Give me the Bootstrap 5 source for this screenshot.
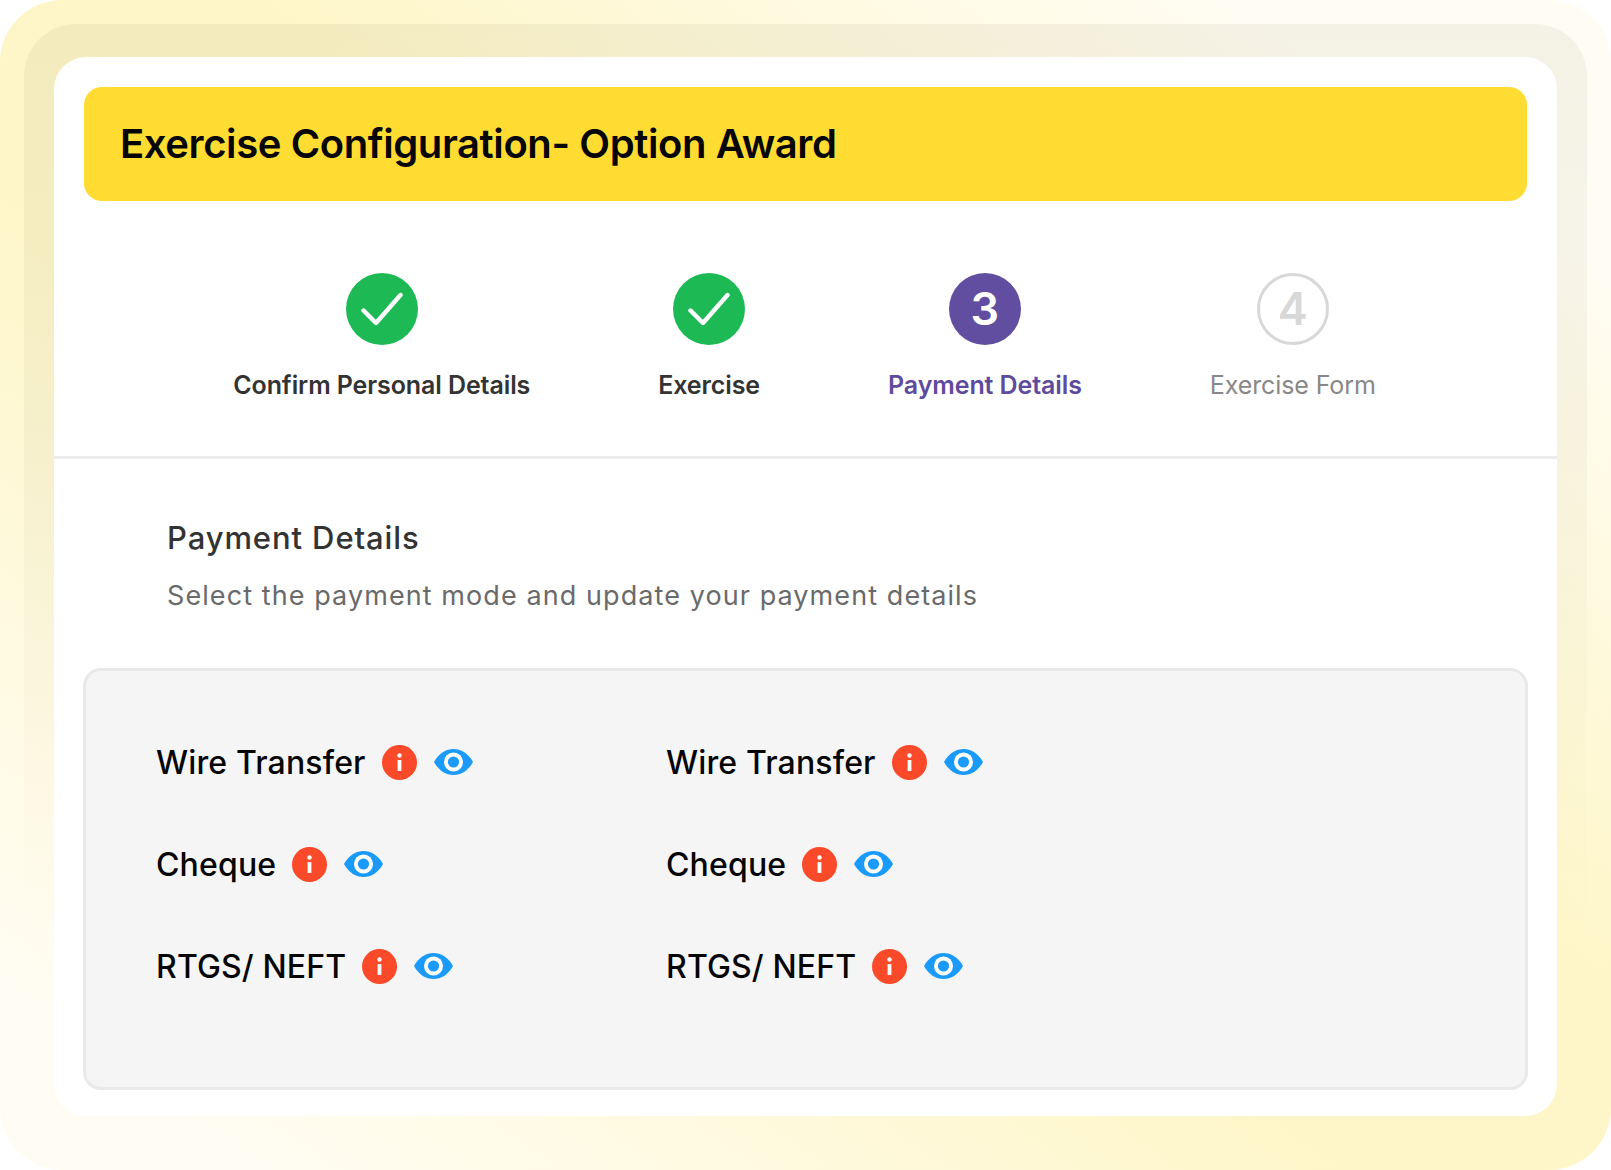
<!doctype html>
<html lang="en">
<head>
<meta charset="utf-8">
<title>Exercise Configuration</title>
<link rel="stylesheet" href="https://cdn.jsdelivr.net/npm/bootstrap@5.3.0/dist/css/bootstrap.min.css">
<style>
html,body{margin:0;background:#fff;font-family:Inter,"Liberation Sans",sans-serif}
.page-shell{width:1611px;height:1170px;border-radius:62px;padding:24px 24px 0;background:linear-gradient(to top right,#fffdf3 8%,#fef6c8 42%,#fef6c8 58%,#fffdf3 88%);overflow:hidden}
.band-shell{height:1146px;border-radius:52px 52px 0 0;padding:33px 30px 0;background:linear-gradient(to bottom,rgba(110,100,60,.075),rgba(110,100,60,.055) 35%,rgba(110,100,60,0) 80%)}
.sheet{width:1503px;height:1059px;background:#fff;border-radius:32px;padding-top:30px}
.title-bar{margin:0 30px;height:114px;background:#ffdc32;border-radius:18px;padding-left:36px}
.title-bar h1{margin:0;font-size:40px;font-weight:600;letter-spacing:-.4px;color:#050505}
.step-row{gap:128px;padding:72px 2px 0 0;height:258px;border-bottom:3px solid #ededed}
.step-dot{width:72px;height:72px;border-radius:50%;font-size:45px;font-weight:600;line-height:1;padding-bottom:2px}
.dot-done{background:#1db954;padding-bottom:0}
.dot-now{background:#624ea0;color:#fff}
.dot-next{border:3px solid #d8d8d8;color:#d8d8d8}
.step-text{margin-top:24px;font-size:25px;line-height:32px;font-weight:600;letter-spacing:-.1px;color:#333;white-space:nowrap}
.text-now{color:#5f4b9e}
.text-next{color:#888;font-weight:400;letter-spacing:-.1px}
.detail-head{padding:58px 0 0 113px;height:209px}
.detail-head h2{margin:0;font-size:31px;line-height:42px;font-weight:500;letter-spacing:.9px;color:#333}
.detail-head p{margin:19px 0 0;font-size:27px;line-height:36px;letter-spacing:1.08px;color:#6a6a6a}
.mode-box{margin:0 29px;height:422px;background:#f5f5f5;border:3px solid #e9e9e9;border-radius:18px;padding:74px 0 0 70px;display:grid;grid-template-columns:510px 510px;grid-auto-rows:36px;row-gap:66px}
.mode-item{gap:16px;font-size:32px;line-height:36px;font-weight:500;letter-spacing:.15px;color:#050505;white-space:nowrap}
.mode-item svg{flex:none;display:block;margin-bottom:2px}
.eye-icon{margin-left:1px}
</style>
</head>
<body>
<div class="page-shell">
 <div class="band-shell">
  <div class="sheet">
   <div class="title-bar d-flex align-items-center"><h1>Exercise Configuration- Option Award</h1></div>
   <div class="step-row d-flex justify-content-center align-items-start">
    <div class="d-flex flex-column align-items-center">
     <div class="step-dot dot-done d-flex align-items-center justify-content-center"><svg width="42" height="34" viewBox="0 0 42 34" fill="none"><path d="M2.5 18.5 15 31 39.5 3" stroke="#fff" stroke-width="4.4" stroke-linecap="round" stroke-linejoin="round"/></svg></div>
     <div class="step-text">Confirm Personal Details</div>
    </div>
    <div class="d-flex flex-column align-items-center">
     <div class="step-dot dot-done d-flex align-items-center justify-content-center"><svg width="42" height="34" viewBox="0 0 42 34" fill="none"><path d="M2.5 18.5 15 31 39.5 3" stroke="#fff" stroke-width="4.4" stroke-linecap="round" stroke-linejoin="round"/></svg></div>
     <div class="step-text">Exercise</div>
    </div>
    <div class="d-flex flex-column align-items-center">
     <div class="step-dot dot-now d-flex align-items-center justify-content-center">3</div>
     <div class="step-text text-now">Payment Details</div>
    </div>
    <div class="d-flex flex-column align-items-center">
     <div class="step-dot dot-next d-flex align-items-center justify-content-center">4</div>
     <div class="step-text text-next">Exercise Form</div>
    </div>
   </div>
   <div class="detail-head">
    <h2>Payment Details</h2>
    <p>Select the payment mode and update your payment details</p>
   </div>
   <div class="mode-box">
    <div class="mode-item d-flex align-items-center">Wire Transfer<svg width="35" height="35" viewBox="0 0 35 35"><circle cx="17.5" cy="17.5" r="17.5" fill="#fb4a2a"/><circle cx="17.5" cy="10.5" r="2.2" fill="#fff"/><rect x="15.6" y="15" width="3.8" height="11" rx=".6" fill="#fff"/></svg><svg class="eye-icon" width="39" height="26" viewBox="0 0 39 26"><path d="M0 13C5 4 12 0 19.5 0S34 4 39 13C34 22 27 26 19.5 26S5 22 0 13Z" fill="#1a9bfc"/><circle cx="19.5" cy="13" r="9.5" fill="#fff"/><circle cx="19.5" cy="13" r="5.6" fill="#1a9bfc"/></svg></div>
    <div class="mode-item d-flex align-items-center">Wire Transfer<svg width="35" height="35" viewBox="0 0 35 35"><circle cx="17.5" cy="17.5" r="17.5" fill="#fb4a2a"/><circle cx="17.5" cy="10.5" r="2.2" fill="#fff"/><rect x="15.6" y="15" width="3.8" height="11" rx=".6" fill="#fff"/></svg><svg class="eye-icon" width="39" height="26" viewBox="0 0 39 26"><path d="M0 13C5 4 12 0 19.5 0S34 4 39 13C34 22 27 26 19.5 26S5 22 0 13Z" fill="#1a9bfc"/><circle cx="19.5" cy="13" r="9.5" fill="#fff"/><circle cx="19.5" cy="13" r="5.6" fill="#1a9bfc"/></svg></div>
    <div class="mode-item d-flex align-items-center">Cheque<svg width="35" height="35" viewBox="0 0 35 35"><circle cx="17.5" cy="17.5" r="17.5" fill="#fb4a2a"/><circle cx="17.5" cy="10.5" r="2.2" fill="#fff"/><rect x="15.6" y="15" width="3.8" height="11" rx=".6" fill="#fff"/></svg><svg class="eye-icon" width="39" height="26" viewBox="0 0 39 26"><path d="M0 13C5 4 12 0 19.5 0S34 4 39 13C34 22 27 26 19.5 26S5 22 0 13Z" fill="#1a9bfc"/><circle cx="19.5" cy="13" r="9.5" fill="#fff"/><circle cx="19.5" cy="13" r="5.6" fill="#1a9bfc"/></svg></div>
    <div class="mode-item d-flex align-items-center">Cheque<svg width="35" height="35" viewBox="0 0 35 35"><circle cx="17.5" cy="17.5" r="17.5" fill="#fb4a2a"/><circle cx="17.5" cy="10.5" r="2.2" fill="#fff"/><rect x="15.6" y="15" width="3.8" height="11" rx=".6" fill="#fff"/></svg><svg class="eye-icon" width="39" height="26" viewBox="0 0 39 26"><path d="M0 13C5 4 12 0 19.5 0S34 4 39 13C34 22 27 26 19.5 26S5 22 0 13Z" fill="#1a9bfc"/><circle cx="19.5" cy="13" r="9.5" fill="#fff"/><circle cx="19.5" cy="13" r="5.6" fill="#1a9bfc"/></svg></div>
    <div class="mode-item d-flex align-items-center">RTGS/ NEFT<svg width="35" height="35" viewBox="0 0 35 35"><circle cx="17.5" cy="17.5" r="17.5" fill="#fb4a2a"/><circle cx="17.5" cy="10.5" r="2.2" fill="#fff"/><rect x="15.6" y="15" width="3.8" height="11" rx=".6" fill="#fff"/></svg><svg class="eye-icon" width="39" height="26" viewBox="0 0 39 26"><path d="M0 13C5 4 12 0 19.5 0S34 4 39 13C34 22 27 26 19.5 26S5 22 0 13Z" fill="#1a9bfc"/><circle cx="19.5" cy="13" r="9.5" fill="#fff"/><circle cx="19.5" cy="13" r="5.6" fill="#1a9bfc"/></svg></div>
    <div class="mode-item d-flex align-items-center">RTGS/ NEFT<svg width="35" height="35" viewBox="0 0 35 35"><circle cx="17.5" cy="17.5" r="17.5" fill="#fb4a2a"/><circle cx="17.5" cy="10.5" r="2.2" fill="#fff"/><rect x="15.6" y="15" width="3.8" height="11" rx=".6" fill="#fff"/></svg><svg class="eye-icon" width="39" height="26" viewBox="0 0 39 26"><path d="M0 13C5 4 12 0 19.5 0S34 4 39 13C34 22 27 26 19.5 26S5 22 0 13Z" fill="#1a9bfc"/><circle cx="19.5" cy="13" r="9.5" fill="#fff"/><circle cx="19.5" cy="13" r="5.6" fill="#1a9bfc"/></svg></div>
   </div>
  </div>
 </div>
</div>
<script src="https://cdn.jsdelivr.net/npm/bootstrap@5.3.0/dist/js/bootstrap.bundle.min.js"></script>
</body>
</html>
